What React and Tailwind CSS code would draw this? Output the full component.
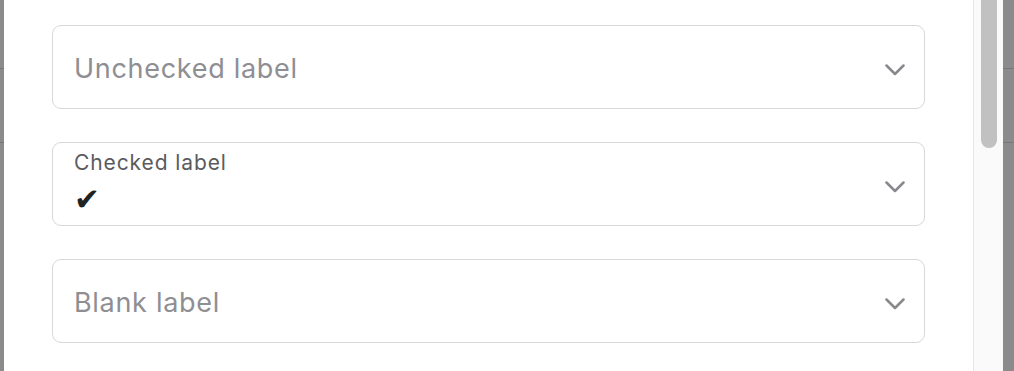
const font = { fontFamily: "Inter, 'Noto Sans', sans-serif" };

function Chevron() {
  return (
    <svg width="20" height="12" viewBox="0 0 20 12" fill="none" className="mt-[5px] shrink-0">
      <path d="M1.5 1.5 L10 10 L18.5 1.5" stroke="#88888d" strokeWidth="2.5" strokeLinecap="round" strokeLinejoin="round" />
    </svg>
  );
}

function SelectField({ label, checked }) {
  return (
    <div className="h-[84px] border border-[#d8d8d8] rounded-[9px] flex items-center justify-between pl-[21px] pr-[19px]">
      {checked ? (
        <div className="self-start flex flex-col pt-[8px]">
          <span className="text-[21px] leading-[24px] text-[#5b5b5f] tracking-[0.9px]">{label}</span>
          <span
            className="text-[31px] leading-[30px] text-[#222] mt-[9px]"
            style={{ fontFamily: "'DejaVu Sans', sans-serif" }}
          >
            ✔
          </span>
        </div>
      ) : (
        <span className="text-[27px] mt-[5px] text-[#8e8e93] tracking-[0.7px]">{label}</span>
      )}
      <Chevron />
    </div>
  );
}

function Strip({ width }) {
  return (
    <div className={`${width} flex flex-col shrink-0`}>
      <div className="h-[68px]" />
      <div className="h-px bg-[#777]" />
      <div className="h-[73px]" />
      <div className="h-px bg-[#777]" />
    </div>
  );
}

export default function App() {
  return (
    <div className="flex h-[371px] overflow-hidden bg-[#8b8b8b]" style={font}>
      <Strip width="w-[4px]" />

      <div className="flex-1 bg-white flex">
        <div className="flex-1 pl-[48px] pr-[48px] pt-[25px] flex flex-col gap-[33px]">
          <SelectField label="Unchecked label" />
          <SelectField label="Checked label" checked />
          <SelectField label="Blank label" />
        </div>

        {/* scrollbar */}
        <div className="w-[30px] bg-[#fafafa] border-l border-[#e6e6e6] pl-[7px] shrink-0">
          <div className="w-[16px] h-[148px] bg-[#c1c1c1] rounded-b-[8px]" />
        </div>
      </div>

      <Strip width="w-[11px]" />
    </div>
  );
}
